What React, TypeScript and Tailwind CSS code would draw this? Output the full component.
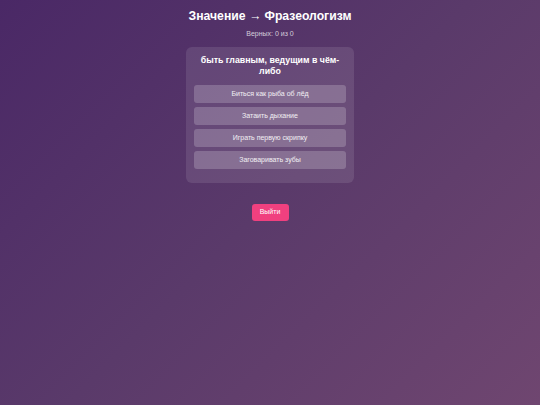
import React from 'react';

const options = [
  'Биться как рыба об лёд',
  'Затаить дыхание',
  'Играть первую скрипку',
  'Заговаривать зубы',
];

export default function App() {
  return (
    <div
      className="min-h-[405px] w-full bg-[linear-gradient(135deg,#4a2866_0%,#5a3a6a_50%,#6f4670_100%)] text-white flex flex-col items-center"
      style={{ fontFamily: '"Liberation Sans", Arial, sans-serif' }}
    >
      <h1 className="mt-[8px] text-[12.2px] leading-[16px] font-bold">Значение → Фразеологизм</h1>
      <p className="mt-[5px] text-[7px] leading-[10px] text-white/75">Верных: 0 из 0</p>

      {/* Card */}
      <div className="mt-[8px] w-[168px] rounded-[6px] bg-white/10 px-[8px] pt-[8px] pb-[14px]">
        <h2 className="text-center text-[8.8px] leading-[11px] font-bold">
          быть главным, ведущим в чём-либо
        </h2>
        <div className="mt-[8px] flex flex-col gap-[4px]">
          {options.map((opt) => (
            <button
              key={opt}
              className="h-[18px] w-full rounded-[3px] bg-white/20 text-[7px] text-white/90"
            >
              {opt}
            </button>
          ))}
        </div>
      </div>

      <button className="mt-[21px] h-[17px] w-[37px] rounded-[3px] bg-[#f0407f] text-[7px] text-white">
        Выйти
      </button>
    </div>
  );
}
